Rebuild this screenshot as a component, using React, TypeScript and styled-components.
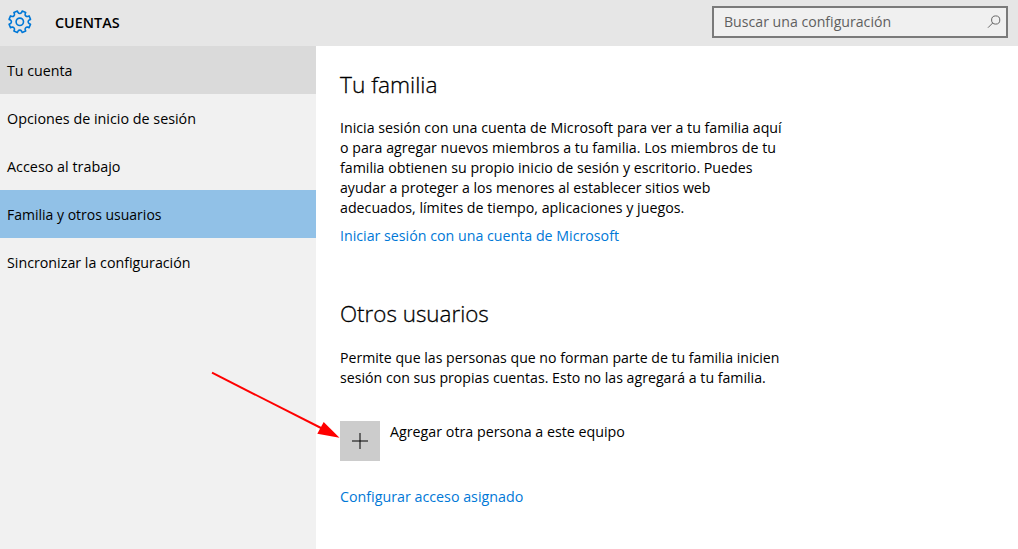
import React from "react";
import styled, { createGlobalStyle } from "styled-components";

const GlobalStyle = createGlobalStyle`
  * { box-sizing: border-box; }
  body { margin: 0; background: #fff; color: #000; font: 14px/20px "Open Sans", "Noto Sans", sans-serif; }
`;

const Window = styled.div`
  position: relative;
  display: flex;
  flex-direction: column;
  width: 1018px;
  height: 549px;
  overflow: hidden;
`;

const Header = styled.header`
  display: flex;
  align-items: center;
  flex: 0 0 46px;
  padding: 0 10px 2px 7px;
  background: #e6e6e6;
`;

const Title = styled.h1`
  margin: 2px auto 0 22px;
  font-size: 14.4px;
  line-height: 20px;
  font-weight: 600;
`;

const SearchBox = styled.div`
  display: flex;
  align-items: center;
  justify-content: space-between;
  width: 296px;
  height: 32px;
  padding: 0 5px 1px 10px;
  border: 2px solid #7a7a7a;
  background: #f0f0f0;
  color: #5f5f5f;
`;

const Body = styled.div`
  display: flex;
  flex: 1;
`;

const Sidebar = styled.nav`
  flex: 0 0 316px;
  background: #f1f1f1;
`;

const NavItem = styled.div<{ $bg?: string }>`
  display: flex;
  align-items: center;
  height: 48px;
  padding: 2px 7px 0 7px;
  background: ${(p) => p.$bg ?? "transparent"};
`;

const Content = styled.main`
  flex: 1;
  padding: 23px 24px 0;
`;

const Section = styled.section<{ $gap?: number }>`
  margin-top: ${(p) => p.$gap ?? 0}px;
`;

const Heading = styled.h2<{ $size: number }>`
  margin: 0 0 17px;
  font-size: ${(p) => p.$size}px;
  line-height: 32px;
  font-weight: 300;
  -webkit-text-stroke: 0.3px #000;
`;

const Line = styled.span<{ $size?: number }>`
  display: block;
  white-space: nowrap;
  font-size: ${(p) => p.$size ?? 14.22}px;
`;

const Link = styled.a`
  display: block;
  margin-top: 8px;
  color: #0078d7;
`;

const AddRow = styled.div`
  display: flex;
  gap: 10px;
  margin: 33px 0 26px;
`;

const AddLabel = styled.div`
  padding-top: 1px;
`;

const AddButton = styled.div`
  display: grid;
  place-items: center;
  width: 40px;
  height: 40px;
  background: #ccc;
`;

const Arrow = styled.svg`
  position: absolute;
  left: 200px;
  top: 360px;
`;

const teeth = Array.from({ length: 8 }, (_, i) => {
  const at = (r: number, deg: number) => {
    const a = ((i * 45 + deg) * Math.PI) / 180;
    return `${(12.8 + r * Math.cos(a)).toFixed(2)} ${(12.8 + r * Math.sin(a)).toFixed(2)}`;
  };
  return `${at(9.4, -12)} L${at(11, -10)} L${at(11, 10)} L${at(9.4, 12)} A2.1 2.1 0 0 0 ${at(9.4, 33)}`;
});

const GearIcon = () => (
  <svg width="26" height="26" viewBox="0 0 26 26" fill="none" stroke="#0078d7" strokeWidth="1.6" strokeLinejoin="round">
    <path d={`M${teeth.join(" L")} Z`} transform="rotate(22.5 12.8 12.8)" />
    <circle cx="12.8" cy="12.8" r="3.7" />
  </svg>
);

const SearchIcon = () => (
  <svg width="14" height="14" viewBox="0 0 14 14" fill="none" stroke="#666" strokeWidth="1">
    <circle cx="8.7" cy="5" r="4.1" />
    <path d="M5.8 7.9 L1 12.7" />
  </svg>
);

export default function App() {
  return (
    <>
      <GlobalStyle />
      <Window>
        <Header>
          <GearIcon />
          <Title>CUENTAS</Title>
          <SearchBox>
            <Line $size={14.13}>Buscar una configuración</Line>
            <SearchIcon />
          </SearchBox>
        </Header>
        <Body>
          <Sidebar>
            <NavItem $bg="#dadada"><Line>Tu cuenta</Line></NavItem>
            <NavItem><Line $size={14.33}>Opciones de inicio de sesión</Line></NavItem>
            <NavItem><Line $size={14.36}>Acceso al trabajo</Line></NavItem>
            <NavItem $bg="#91c1e7"><Line $size={14}>Familia y otros usuarios</Line></NavItem>
            <NavItem><Line $size={14.25}>Sincronizar la configuración</Line></NavItem>
          </Sidebar>
          <Content>
            <Section>
              <Heading $size={22.7}>Tu familia</Heading>
              <Line>Inicia sesión con una cuenta de Microsoft para ver a tu familia aquí</Line>
              <Line $size={14.2}>o para agregar nuevos miembros a tu familia. Los miembros de tu</Line>
              <Line>familia obtienen su propio inicio de sesión y escritorio. Puedes</Line>
              <Line $size={14.13}>ayudar a proteger a los menores al establecer sitios web</Line>
              <Line>adecuados, límites de tiempo, aplicaciones y juegos.</Line>
              <Link><Line>Iniciar sesión con una cuenta de Microsoft</Line></Link>
            </Section>
            <Section $gap={52}>
              <Heading $size={22.4}>Otros usuarios</Heading>
              <Section $gap={18}>
                <Line $size={14.12}>Permite que las personas que no forman parte de tu familia inicien</Line>
                <Line $size={14.16}>sesión con sus propias cuentas. Esto no las agregará a tu familia.</Line>
              </Section>
              <AddRow>
                <AddButton>
                  <svg width="16" height="16" viewBox="0 0 16 16" fill="none" stroke="#000" strokeOpacity="0.5" strokeWidth="2">
                    <path d="M8 0V16" />
                    <path d="M0 8H16" />
                  </svg>
                </AddButton>
                <AddLabel><Line $size={14.27}>Agregar otra persona a este equipo</Line></AddLabel>
              </AddRow>
              <Link><Line $size={14.27}>Configurar acceso asignado</Line></Link>
            </Section>
          </Content>
        </Body>
        <Arrow width="150" height="90" viewBox="0 0 150 90">
          <path d="M12 12.7 L124 69.5" stroke="#f00" strokeWidth="2" />
          <path d="M139.5 77.7 L123.7 62 L117.3 73.8 Z" fill="#f00" />
        </Arrow>
      </Window>
    </>
  );
}
